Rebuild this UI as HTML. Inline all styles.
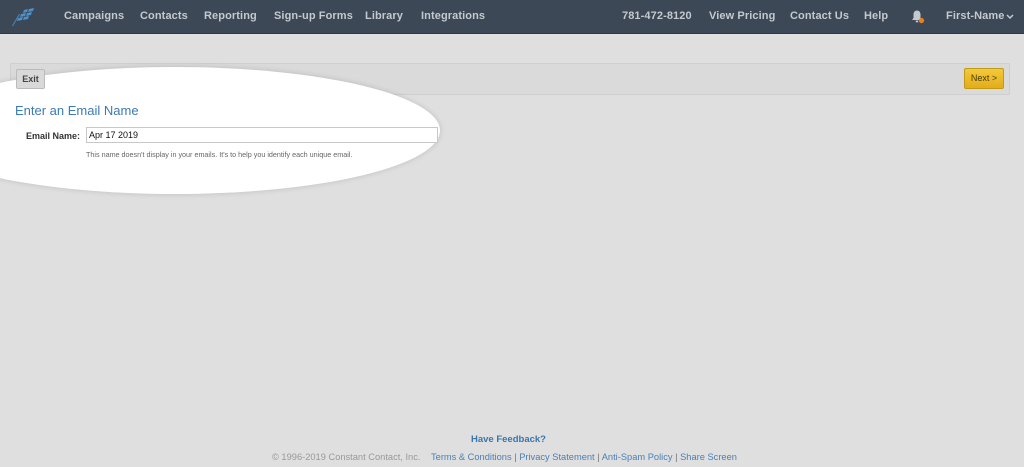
<!DOCTYPE html>
<html><head><style>
body{margin:0;width:1024px;height:467px;background:#dfdfdf;font-family:"Liberation Sans",sans-serif;position:relative;overflow:hidden}
.hdr{position:absolute;left:0;top:0;width:1024px;height:33px;background:#3c4855;border-bottom:1px solid #2f3843}
.hdr span{position:absolute;top:10px;font-size:11px;font-weight:bold;color:#c4c9cf;letter-spacing:0.1px}
.ell{position:absolute;left:-90px;top:67px;width:530px;height:127px;border-radius:50%;background:#fff;box-shadow:0 0 6px rgba(0,0,0,.15)}
.bar{position:absolute;left:10px;top:63px;width:998px;height:30px;border:1px solid #cfcfcf;border-radius:2px;background:rgba(0,0,0,.02)}
.exit{position:absolute;left:16px;top:69px;width:27px;height:18px;border:1px solid #bbb;border-radius:2px;background:#d9d9d9;font-size:9px;font-weight:bold;color:#444;text-align:center;line-height:18px}
.next{position:absolute;left:964px;top:68px;width:38px;height:19px;border:1px solid #c39a14;border-radius:2px;background:linear-gradient(#f3c93a,#e2ad1c);font-size:9px;color:#4a3a00;text-align:center;line-height:19px}
</style></head><body>
<div class="hdr">
<svg style="position:absolute;left:10px;top:7px" width="28" height="20" viewBox="0 0 28 20"><g fill="#4f90c8"><path d="M14 3l4-1-1 3-4 1z"/><path d="M19 2l5-1-1 3-5 1z"/><path d="M11 7l5-1-1 3-5 1z"/><path d="M17 6l5-1-1 3-5 1z"/><path d="M8 11l5-1-1 3-5 1z"/><path d="M14 10l5-1-1 3-5 1z"/><path d="M2 19l7-12 1 0-7 12z"/></g></svg>
<span style="left:64px">Campaigns</span><span style="left:140px">Contacts</span><span style="left:204px">Reporting</span><span style="left:274px">Sign-up Forms</span><span style="left:365px">Library</span><span style="left:421px">Integrations</span>
<span style="left:622px">781-472-8120</span><span style="left:709px">View Pricing</span><span style="left:790px">Contact Us</span><span style="left:864px">Help</span>
<svg style="position:absolute;left:910px;top:9px" width="16" height="16" viewBox="0 0 16 16"><path d="M7 1.5c-2.2 0-3.5 1.8-3.5 4V9L2 11h10L10.5 9V5.5C10.5 3.3 9.2 1.5 7 1.5z" fill="#c4c9cf"/><rect x="5.8" y="11.5" width="2.4" height="1.8" fill="#c4c9cf"/><circle cx="11.5" cy="11.5" r="2.6" fill="#e8801f"/></svg>
<span style="left:946px">First-Name</span>
<svg style="position:absolute;left:1006px;top:14px" width="8" height="6" viewBox="0 0 8 6"><path d="M1 1l3 3 3-3" stroke="#c4c9cf" stroke-width="1.5" fill="none"/></svg>
</div>
<div class="bar"></div>
<div class="ell"></div>
<div class="exit">Exit</div>
<div class="next">Next &gt;</div>
<div style="position:absolute;left:15px;top:103px;font-size:13px;color:#3d7ab5">Enter an Email Name</div>
<div style="position:absolute;left:26px;top:131px;font-size:9px;font-weight:bold;color:#333">Email Name:</div>
<div style="position:absolute;left:86px;top:127px;width:348px;height:14px;border:1px solid #c8c8c8;background:#fff;font-size:9px;line-height:14px;padding-left:2px;color:#111">Apr 17 2019</div>
<div style="position:absolute;left:86px;top:150px;font-size:7.2px;color:#666">This name doesn't display in your emails. It's to help you identify each unique email.</div>
<div style="position:absolute;left:471px;top:434px;font-size:9.5px;font-weight:bold;color:#3a75ad">Have Feedback?</div>
<div style="position:absolute;left:272px;top:452px;font-size:9.3px;color:#999;white-space:nowrap">© 1996-2019 Constant Contact, Inc.</div>
<div style="position:absolute;left:431px;top:452px;font-size:9.3px;color:#4a80b8;white-space:nowrap">Terms &amp; Conditions <span style="color:#777">|</span> Privacy Statement <span style="color:#777">|</span> Anti-Spam Policy <span style="color:#777">|</span> Share Screen</div>
</body></html>
